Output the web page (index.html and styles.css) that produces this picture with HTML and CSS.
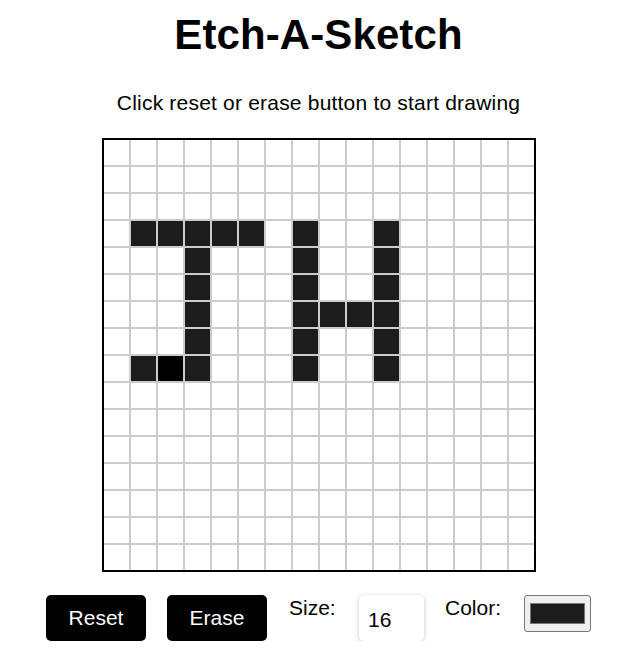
FILE: index.html
```html
<!DOCTYPE html>
<html lang="en">
<head>
<meta charset="utf-8">
<title>Etch-A-Sketch</title>
<link rel="stylesheet" href="styles.css">
</head>
<body>
  <main class="app">
    <h1 class="title">Etch-A-Sketch</h1>
    <p class="hint">Click reset or erase button to start drawing</p>
    <div class="board" id="board"></div>
    <div class="controls">
      <button class="btn" type="button">Reset</button>
      <button class="btn" type="button">Erase</button>
      <label class="label label-size" for="size">Size:</label>
      <input class="size-input" id="size" type="number" value="16" min="1" max="100">
      <label class="label label-color" for="color">Color:</label>
      <input class="color-input" id="color" type="color" value="#1c1c1c">
    </div>
  </main>
  <script src="script.js"></script>
</body>
</html>
```

FILE: styles.css
```css
* { box-sizing: border-box; }

html, body { margin: 0; padding: 0; background: #fff; }

body {
  font-family: "Liberation Sans", Arial, sans-serif;
  color: #000;
  padding-left: 20px;
}

.app {
  display: flex;
  flex-direction: column;
  align-items: center;
}

.title {
  margin: 12px 0 0;
  font-size: 42px;
  line-height: 46px;
  font-weight: 700;
  letter-spacing: 0.1px;
}

.hint {
  margin: 33px 0 0;
  font-size: 21px;
  line-height: 24px;
  letter-spacing: 0.2px;
}

.board {
  margin-top: 23px;
  display: grid;
  grid-template-columns: repeat(16, 25px);
  grid-auto-rows: 25px;
  gap: 2px;
  background: #ccc;
  border: 2px solid #000;
}

.cell { background: #fff; }
.cell.ink { background: #1c1c1c; }
.cell.ink-black { background: #000; }

.controls {
  margin-top: 23px;
  display: flex;
  align-items: flex-start;
  gap: 21px;
}

.btn {
  width: 100px;
  height: 46px;
  border: none;
  border-radius: 5px;
  background: #000;
  color: #fff;
  font-family: "Liberation Sans", Arial, sans-serif;
  font-size: 21px;
  padding: 0;
  cursor: pointer;
}

.label {
  font-size: 21px;
  line-height: 24px;
  margin-top: 1px;
}

.label-size { width: 47px; margin-left: 1px; }
.label-color { width: 57px; }

.size-input {
  width: 65px;
  height: 46px;
  margin-left: 2px;
  border: none;
  border-radius: 5px;
  box-shadow: 0 1px 4px rgba(0, 0, 0, 0.25);
  font-family: "Liberation Sans", Arial, sans-serif;
  font-size: 21px;
  padding: 4px 0 0 9px;
  color: #000;
  background: #fff;
  -moz-appearance: textfield;
  appearance: textfield;
}

.size-input::-webkit-outer-spin-button,
.size-input::-webkit-inner-spin-button {
  -webkit-appearance: none;
  margin: 0;
}

.color-input {
  width: 67px;
  height: 37px;
  margin-left: 1px;
  padding: 0;
  border: 1px solid #767676;
  border-radius: 3px;
  background: #efefef;
  cursor: pointer;
  -webkit-appearance: none;
  appearance: none;
}

.color-input::-webkit-color-swatch-wrapper { padding: 7px 5px; }
.color-input::-webkit-color-swatch { border: 1px solid #777; border-radius: 0; }
```

FILE: script.js
```js
(function () {
  var board = document.getElementById('board');
  var size = 16;
  var ink = {
    '3,1': 1, '3,2': 1, '3,3': 1, '3,4': 1, '3,5': 1,
    '4,3': 1, '5,3': 1, '6,3': 1, '7,3': 1, '8,3': 1,
    '8,1': 1, '8,2': 2,
    '3,7': 1, '4,7': 1, '5,7': 1, '6,7': 1, '7,7': 1, '8,7': 1,
    '3,10': 1, '4,10': 1, '5,10': 1, '6,10': 1, '7,10': 1, '8,10': 1,
    '6,8': 1, '6,9': 1
  };
  for (var r = 0; r < size; r++) {
    for (var c = 0; c < size; c++) {
      var cell = document.createElement('div');
      cell.className = 'cell';
      var v = ink[r + ',' + c];
      if (v === 1) cell.className += ' ink';
      if (v === 2) cell.className += ' ink-black';
      board.appendChild(cell);
    }
  }
})();
```
